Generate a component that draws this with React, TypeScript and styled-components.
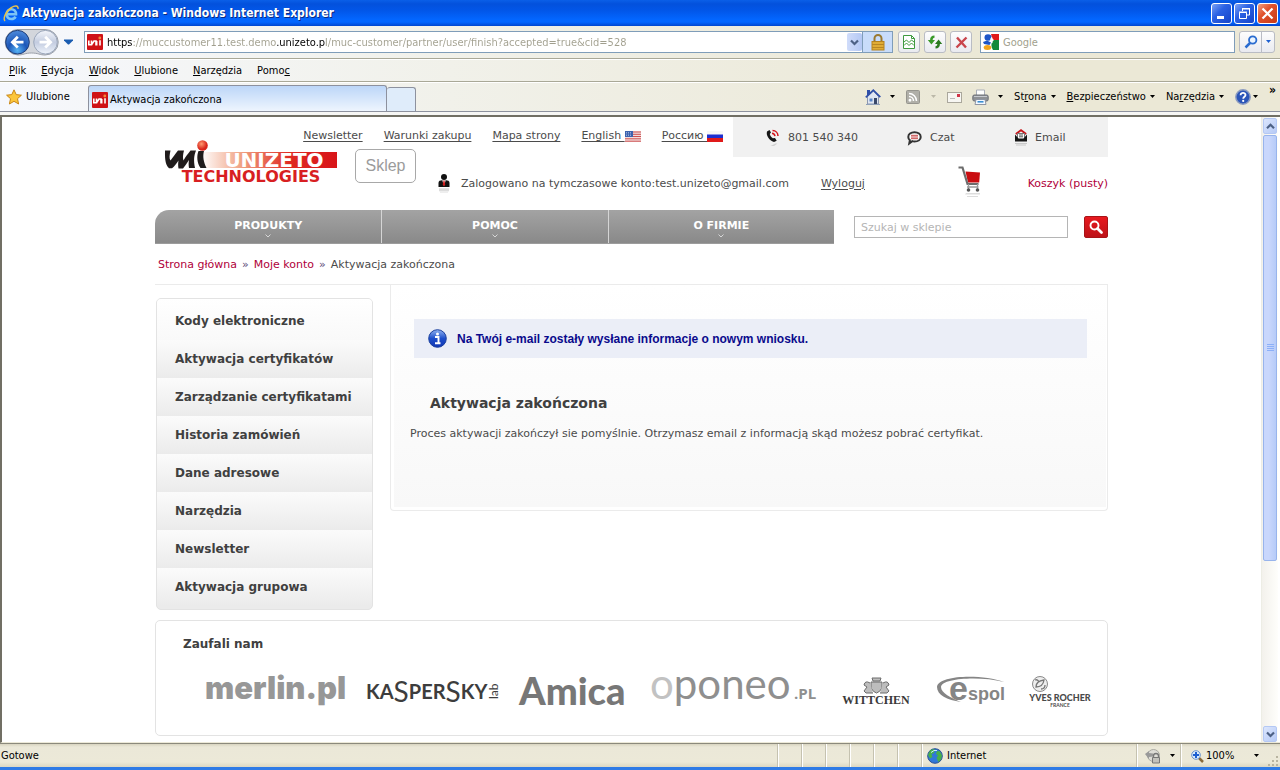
import React from "react";
import styled, { createGlobalStyle } from "styled-components";

const ui = `"DejaVu Sans Condensed", "DejaVu Sans", sans-serif`;
const web = `"DejaVu Sans", Verdana, sans-serif`;

const GlobalStyle = createGlobalStyle`
  * { box-sizing: border-box; }
  body { margin: 0; background: #ece9d8; }
  button, input { font: inherit; color: inherit; margin: 0; }
  button { padding: 0; border: 0; background: none; cursor: pointer; }
  svg { display: block; flex: none; overflow: visible; }
`;

const Window = styled.div`
  display: flex;
  flex-direction: column;
  min-height: 100vh;
  font: 11px/14px ${ui};
  color: #000;
`;

/* ---------- window chrome ---------- */

const TitleBar = styled.header`
  display: flex;
  align-items: center;
  gap: 3px;
  height: 26px;
  padding: 0 2px 0 3px;
  background: linear-gradient(#0a5fe8 0, #0351dc 15%, #0256e8 40%, #0366ff 75%, #0366ff 85%, #0146cf 100%);
  color: #fff;
`;

const WindowTitle = styled.h1`
  flex: 1;
  margin: 0;
  font: bold 12px/16px ${ui};
  text-shadow: 1px 1px 0 #0a2a80;
`;

const CaptionButtons = styled.div`
  display: flex;
  gap: 2px;
`;

const CaptionButton = styled.button<{ $close?: boolean }>`
  display: flex;
  align-items: center;
  justify-content: center;
  width: 21px;
  height: 21px;
  border: 1px solid #fff;
  border-radius: 3px;
  background: ${(p) =>
    p.$close
      ? "linear-gradient(135deg, #f0a080, #e0522c 40%, #c83a14)"
      : "linear-gradient(135deg, #7ba2f5, #2b62e4 40%, #1544c8)"};
`;

const barBackground = "linear-gradient(90deg, #f6f8fd 0, #f1f1ea 35%, #ebe8d6 75%)";

const AddressBar = styled.div`
  display: flex;
  align-items: center;
  height: 33px;
  padding: 0 5px;
  background: ${barBackground};
  border-bottom: 1px solid #a9a897;
`;

const NavButtons = styled.div`
  display: flex;
  align-items: center;
  gap: 4px;
  width: 79px;
`;

const UrlField = styled.div`
  display: flex;
  flex: 1;
  align-items: center;
  height: 22px;
  padding-left: 2px;
  border: 1px solid #7f9db9;
  background: #fff;
`;

const UrlInput = styled.input`
  flex: 1;
  min-width: 0;
  height: 20px;
  margin-left: 4px;
  padding: 1px 0 0;
  border: 0;
  outline: 0;
  color: #8c8a78;
  -webkit-text-fill-color: transparent;
  background: linear-gradient(90deg, #000 26px, #a19f8e 26px 169px, #000 169px 219px, #a19f8e 219px);
  -webkit-background-clip: text;
  background-clip: text;
`;

const DropButton = styled.button`
  display: flex;
  align-items: center;
  justify-content: center;
  width: 15px;
  height: 18px;
  border-radius: 2px;
  background: linear-gradient(90deg, #d0dcfa, #b4c8f4);
`;

const LockBox = styled.button`
  display: flex;
  align-items: center;
  justify-content: center;
  width: 30px;
  height: 22px;
  margin-right: 5px;
  border: 1px solid #7f9db9;
  border-left: 0;
  background: #c8dcfa;
`;

const ToolButton = styled.button`
  display: flex;
  align-items: center;
  justify-content: center;
  width: 22px;
  height: 22px;
  margin-right: 4px;
  border: 1px solid #b9bcc4;
  border-radius: 3px;
  background: linear-gradient(#fdfdfd, #e9eaf0);
`;

const SearchField = styled.label`
  display: flex;
  align-items: center;
  gap: 4px;
  width: 255px;
  height: 22px;
  margin-left: 4px;
  padding-left: 2px;
  border: 1px solid #7f9db9;
  background: #fff;
`;

const SearchInput = styled.input`
  flex: 1;
  min-width: 0;
  padding: 1px 0 0;
  border: 0;
  outline: 0;
  background: none;
  &::placeholder { color: #a19f8e; opacity: 1; }
`;

const SearchButtons = styled.div`
  display: flex;
  height: 22px;
  margin-left: 4px;
  border: 1px solid #b9bcc4;
  border-radius: 3px;
  background: linear-gradient(#fdfdfd, #e9eaf0);
`;

const SearchPart = styled.button<{ $width: number }>`
  display: flex;
  align-items: center;
  justify-content: center;
  width: ${(p) => p.$width}px;
  & + & { border-left: 1px solid #b9bcc4; }
`;

const MenuBar = styled.nav`
  display: flex;
  align-items: center;
  gap: 15px;
  height: 23px;
  padding: 1px 9px 0;
  background: ${barBackground};
  border-top: 1px solid #fff;
  border-bottom: 1px solid #a9a897;
`;

const TabRow = styled.div`
  display: flex;
  height: 30px;
  padding-left: 6px;
  background: ${barBackground};
  border-top: 1px solid #fff;
  border-bottom: 1px solid #8d919e;
`;

const Favorites = styled.button`
  display: flex;
  align-items: center;
  gap: 4px;
  width: 82px;
`;

const Tab = styled.button`
  display: flex;
  align-items: center;
  align-self: flex-end;
  gap: 2px;
  width: 299px;
  height: 26px;
  padding: 2px 3px 0;
  border: 1px solid #8d919e;
  border-bottom: 0;
  border-radius: 3px 3px 0 0;
  background: linear-gradient(#bcd6f8, #eef5fe);
`;

const NewTab = styled.button`
  align-self: flex-end;
  width: 29px;
  height: 24px;
  border: 1px solid #8d919e;
  border-bottom: 0;
  border-left: 0;
  border-radius: 3px 3px 0 0;
  background: #dfecfa;
`;

const CommandBar = styled.div`
  display: flex;
  flex: 1;
  align-items: center;
  justify-content: flex-end;
  gap: 10px;
  padding-right: 4px;
`;

const Command = styled.button<{ $gap?: number }>`
  display: flex;
  align-items: center;
  gap: ${(p) => p.$gap ?? 3}px;
`;

const Chevrons = styled.button`
  align-self: flex-start;
  font-weight: bold;
  font-size: 12px;
`;

const Frame = styled.div`
  display: flex;
  flex: 1;
  margin-top: 3px;
  padding-right: 2px;
  border-top: 2px solid #716f64;
  border-left: 2px solid #716f64;
  border-bottom: 1px solid #ece9d8;
  background: #fff;
`;

const Strip = styled.div`
  display: flex;
  flex: 1;
  flex-direction: column;
  background: #f6f6f4;
`;

const ScrollBar = styled.div`
  display: flex;
  flex-direction: column;
  width: 17px;
  padding: 1px 1px 0;
  border-left: 1px solid #edede5;
  background: linear-gradient(90deg, #f3f1ec, #fefefb);
`;

const ScrollButton = styled.button`
  display: flex;
  align-items: center;
  justify-content: center;
  height: 16px;
  border: 1px solid #b4c8f4;
  border-radius: 2px;
  background: linear-gradient(135deg, #dce6fd, #b6caf6);
`;

const ScrollTrack = styled.div`
  flex: 1;
  padding-top: 1px;
`;

const ScrollThumb = styled.div`
  display: flex;
  align-items: center;
  justify-content: center;
  height: 72%;
  border: 1px solid #98b4ec;
  border-radius: 2px;
  background: linear-gradient(90deg, #c9d7fc 40%, #b6cbf8);
`;

const StatusBar = styled.footer`
  display: flex;
  align-items: stretch;
  height: 27px;
  padding: 0 1px;
  border-top: 1px solid #8b897c;
  border-bottom: 3px solid #2f7be6;
  background: linear-gradient(#d8d4c0, #ebe8d8 3px, #ece9d8 18px, #dcd8c2);
`;

const StatusCell = styled.div<{ $width?: number; $pad?: number; $gap?: number }>`
  display: flex;
  align-items: center;
  gap: ${(p) => p.$gap ?? 4}px;
  width: ${(p) => (p.$width ? `${p.$width}px` : "auto")};
  flex: ${(p) => (p.$width ? "none" : 1)};
  padding-top: 1px;
  padding-left: ${(p) => p.$pad ?? 0}px;
  & + & {
    border-left: 1px solid #c5c2b0;
    box-shadow: inset 1px 0 0 #fff;
  }
`;

const ZoomValue = styled.span`
  width: 45px;
`;

const GripBox = styled.span`
  align-self: flex-end;
  margin-left: auto;
`;

/* ---------- web page ---------- */

const Viewport = styled.main`
  flex: 1;
  min-width: 0;
  padding-bottom: 6px;
  font: 11px/14px ${web};
  color: #4b4b4b;
`;

const Site = styled.div`
  max-width: 953px;
  margin: 0 auto;
`;

const TopRow = styled.div`
  display: flex;
  justify-content: flex-end;
  height: 40px;
`;

const TopLinks = styled.nav`
  display: flex;
  align-items: center;
  gap: 21px;
  margin-right: 10px;
  padding-bottom: 2px;
`;

const TextLink = styled.a<{ $tone?: "red" }>`
  display: flex;
  align-items: center;
  white-space: pre;
  color: ${(p) => (p.$tone ? "#b0003a" : "#4b4b4b")};
  text-decoration: ${(p) => (p.$tone ? "none" : "underline")};
  text-underline-offset: 2px;
`;

const Contacts = styled.div`
  display: grid;
  grid-template-columns: 141px 108px 1fr;
  align-items: center;
  width: 375px;
  padding-top: 1px;
  padding-left: 33px;
  background: #f1f1f1;
`;

const Contact = styled.a`
  display: flex;
  align-items: center;
  gap: 8px;
  color: #4b4b4b;
  text-decoration: none;
`;

const BrandRow = styled.div`
  display: flex;
  align-items: center;
  height: 53px;
  padding-left: 10px;
`;

const Brand = styled.div`
  display: flex;
  align-items: flex-end;
  align-self: flex-start;
  gap: 17px;
  margin-top: -17px;
  margin-right: 22px;
`;

const ShopButton = styled.button`
  width: 61px;
  height: 34px;
  border: 1px solid #a8a8a8;
  border-radius: 5px;
  font: 16px/20px "Liberation Sans", sans-serif;
  color: #9b9b9b;
`;

const Account = styled.div`
  display: flex;
  align-items: center;
  gap: 11px;
  margin-right: 32px;
  white-space: nowrap;
`;

const Basket = styled.div`
  display: flex;
  align-items: center;
  gap: 46px;
  margin-left: auto;
`;

const NavRow = styled.div`
  display: flex;
  align-items: center;
`;

const MainNav = styled.nav`
  display: grid;
  grid-template-columns: repeat(3, 1fr);
  flex: 1;
  height: 34px;
  border-radius: 14px 0 0 0;
  border-bottom: 1px solid #9c9c9c;
  background: linear-gradient(#a3a3a3, #898989);
`;

const NavItem = styled.a`
  display: flex;
  flex-direction: column;
  align-items: center;
  gap: 1px;
  padding-top: 9px;
  font-weight: bold;
  color: #fff;
  text-decoration: none;
  & + & { border-left: 1px solid #d5d5d5; }
`;

const ShopSearch = styled.form`
  display: flex;
  justify-content: space-between;
  width: 274px;
  padding-left: 20px;
`;

const ShopSearchInput = styled.input`
  width: 214px;
  height: 22px;
  padding: 0 6px;
  border: 1px solid #b5b5b5;
  outline: 0;
  &::placeholder { color: #b5b5b5; opacity: 1; }
`;

const ShopSearchButton = styled.button`
  display: flex;
  align-items: center;
  justify-content: center;
  width: 24px;
  height: 22px;
  border: 1px solid #a81418;
  border-radius: 2px;
  background: linear-gradient(#e8191f, #bd1218);
`;

const Breadcrumb = styled.nav`
  display: flex;
  align-items: center;
  gap: 5px;
  height: 41px;
  padding-top: 2px;
  padding-left: 3px;
  border-bottom: 1px solid #ebebeb;
  color: #5c4a78;
`;

const Current = styled.span`
  color: #4b4b4b;
`;

const Columns = styled.div`
  display: flex;
  align-items: flex-start;
  gap: 17px;
  padding-left: 1px;
`;

const SideMenu = styled.nav`
  width: 217px;
  margin-top: 13px;
  overflow: hidden;
  border: 1px solid #e3e3e3;
  border-radius: 5px;
  background: #ebebeb;
  padding-bottom: 3px;
`;

const SideLink = styled.a`
  display: flex;
  align-items: center;
  height: 38px;
  padding: 0 18px;
  background: linear-gradient(#fbfbfb, #ebebeb);
  font: bold 12px/16px ${web};
  color: #404040;
  text-decoration: none;
  &:first-child {
    height: 41px;
    padding-top: 2px;
    background: linear-gradient(#fff, #f9f9f9);
  }
`;

const Panel = styled.section`
  flex: 1;
  min-width: 0;
  padding: 0 1px 3px 3px;
  border: 1px solid #ebebeb;
  border-top: 0;
  border-radius: 0 0 4px 4px;
`;

const PanelBody = styled.div`
  min-height: 222px;
  padding: 34px 19px 0 16px;
  background: linear-gradient(#fff, #f8f8f8);
`;

const Notice = styled.p`
  display: flex;
  align-items: center;
  gap: 10px;
  height: 39px;
  margin: 0 0 0 4px;
  padding-left: 14px;
  background: #ebeef7;
  font: bold 12px/16px "Liberation Sans", sans-serif;
  color: #0a0a8c;
`;

const Heading = styled.h2`
  margin: 35px 0 0 20px;
  font: bold 14px/20px ${web};
  color: #404040;
`;

const Message = styled.p`
  margin: 14px 0 0;
`;

const Trusted = styled.section`
  height: 116px;
  margin-top: 10px;
  padding: 15px 15px 0 27px;
  border: 1px solid #e3e3e3;
  border-radius: 5px;
`;

const TrustedTitle = styled.h3`
  margin: 0 0 18px;
  font: bold 12px/16px ${web};
  color: #404040;
`;

const Partners = styled.div`
  display: flex;
  gap: 22px;
  padding-left: 23px;
`;

/* ---------- icons ---------- */

const Down = ({ color = "#000" }: { color?: string }) => (
  <svg width="7" height="4" viewBox="0 0 7 4"><path d="M1 0h5L3.5 3z" fill={color} /></svg>
);

const Chevron = ({ up = false, color = "#4d6185" }: { up?: boolean; color?: string }) => (
  <svg width="9" height="7" viewBox="0 0 9 7" fill="none" stroke={color} strokeWidth="2.2">
    <path d={up ? "M1 5.2L4.5 1.8 8 5.2" : "M1 1.5L4.5 5 8 1.5"} />
  </svg>
);

const IeIcon = () => (
  <svg width="16" height="17" viewBox="0 0 16 17" fill="none">
    <path d="M3.5 9.3H13C13 5.8 10.800 4.300 8.400 4.300 5.600 4.300 3.700 6.400 3.700 9.300c0 2.900 2 4.700 4.700 4.700 2 0 3.400-.9 4.100-2.400" stroke="#7cc4f5" strokeWidth="2.600" />
    <path d="M2 16C-.5 13.500 3.500 5.500 8.500 2.500 11.500.5 15.500.2 15 3.800" stroke="#e8c34a" strokeWidth="1.500" />
  </svg>
);

const BackForward = () => (
  <svg width="55" height="29" viewBox="0 0 55 29">
    <defs>
      <radialGradient id="backFill" cx=".5" cy=".85" r=".8">
        <stop offset="0" stopColor="#58b4f4" /><stop offset=".5" stopColor="#1c56b8" /><stop offset="1" stopColor="#4a86d8" />
      </radialGradient>
      <linearGradient id="fwdFill" x2="0" y2="1">
        <stop offset="0" stopColor="#f4f6fb" /><stop offset=".5" stopColor="#c3cce0" /><stop offset="1" stopColor="#eef3fb" />
      </linearGradient>
    </defs>
    <path d="M13 1.500h27a13 12.500 0 0 1 0 25.500c-5 0-7-2-13.500-2S18 27 13 27A12.700 12.700 0 0 1 13 1.500z" fill="#d3d6dc" stroke="#9a9fa8" />
    <circle cx="12.500" cy="14.200" r="11.800" fill="url(#backFill)" stroke="#1d3c78" />
    <path d="M18.500 14.200H8M12.800 8.800L7.400 14.200l5.400 5.400" fill="none" stroke="#fff" strokeWidth="2.800" />
    <circle cx="40.500" cy="14.200" r="11.800" fill="url(#fwdFill)" stroke="#9aa6ba" />
    <path d="M34.500 14.200H45M40.200 8.800l5.400 5.400-5.400 5.400" fill="none" stroke="#fff" strokeWidth="2.800" />
  </svg>
);

const SiteIcon = () => (
  <svg width="16" height="16" viewBox="0 0 16 16">
    <rect width="16" height="16" rx="1" fill="#cf1217" />
    <path d="M1.800 6.500v4.300h2.700V6.500M4.500 10.800l2.500-3.800h2V11.500M9.700 7v4.500M13 6.300v5.200" stroke="#fff" strokeWidth="1.600" fill="none" />
    <circle cx="12.800" cy="4" r="1.400" fill="#f2873c" />
  </svg>
);

const LockIcon = () => (
  <svg width="14" height="17" viewBox="0 0 14 17">
    <path d="M3.500 8V4.500a3.500 3.500 0 0 1 7 0V8" fill="none" stroke="#9a7a30" strokeWidth="2" />
    <rect x="1" y="7.500" width="12" height="8.500" fill="#e0ac35" stroke="#b58220" />
    <path d="M1 10.500h12M1 13.500h12" stroke="#b98622" />
  </svg>
);

const BrokenPageIcon = () => (
  <svg width="14" height="16" viewBox="0 0 14 16" fill="none" stroke="#3f9a3f">
    <path d="M1.500 1.500h8l3 3v10h-11z" fill="#fff" /><path d="M9.500 1.500v3h3" />
    <path d="M2 8l2.500-2L7 8.500 9.500 6 12 8M2 11.500L4.500 9 7 11.500 9.500 9l2.500 2.500" />
  </svg>
);

const RefreshIcon = () => (
  <svg width="16" height="14" viewBox="0 0 16 14">
    <path d="M7.500.5v2.200C6 3 5.700 3.600 5.700 5H8L4.400 9.500.8 5h2.300C3.100 2 4.500.7 7.500.5z" fill="#3a9a2a" />
    <path d="M8.500 13.500v-2.200c1.500-.3 1.800-.9 1.800-2.300H8l3.600-4.500L15.200 9h-2.300c0 3-1.400 4.300-4.400 4.500z" fill="#2a7a1e" />
  </svg>
);

const StopIcon = () => (
  <svg width="13" height="13" viewBox="0 0 13 13"><path d="M2 1.500l9 10M11.500 1.500l-10 10" stroke="#c9454c" strokeWidth="2.400" /></svg>
);

const GoogleIcon = () => (
  <svg width="16" height="16" viewBox="0 0 16 16">
    <rect width="16" height="16" fill="#fff" />
    <path d="M8 0h8v6h-5C9 5 8.500 2.500 8 0z" fill="#e01b1b" />
    <path d="M11 6h5v10h-6C7.500 12 8 8.500 11 6z" fill="#128a3a" />
    <ellipse cx="5" cy="3.500" rx="3.500" ry="3.300" fill="#1d56c8" />
    <path d="M0 8l4-1.500 4 2L6.500 11 1 10z" fill="#1d56c8" />
    <ellipse cx="4.500" cy="13.500" rx="3.800" ry="2.500" fill="#f2a51c" />
    <path d="M9 3.500Q6.500 7 9.500 8.500" stroke="#fff" strokeWidth="1.500" fill="none" />
  </svg>
);

const MagnifierIcon = () => (
  <svg width="14" height="14" viewBox="0 0 14 14" fill="none" stroke="#2a6cd0">
    <circle cx="8.700" cy="5" r="3.700" strokeWidth="1.800" fill="#eaf4ff" /><path d="M6 8l-4.500 4.500" strokeWidth="2.500" />
  </svg>
);

const StarIcon = () => (
  <svg width="16" height="16" viewBox="0 0 16 16">
    <path d="M8 .8l2.200 4.800 5.200.6-3.900 3.500 1.100 5.300L8 12.300 3.400 15l1.100-5.300L.6 6.200l5.200-.6z" fill="#fcc63c" stroke="#c98718" />
  </svg>
);

const HomeIcon = () => (
  <svg width="16" height="16" viewBox="0 0 16 16">
    <path d="M2 1h3v5H2z" fill="#2f4fa8" /><path d="M2.500 7.500L8.500 2l5 5.500V15h-11z" fill="#dfe6f2" stroke="#8b97b0" />
    <path d="M.8 8.300L8.300 1.200l7 7" fill="none" stroke="#2f4fa8" strokeWidth="1.800" />
    <path d="M4.500 9.500h3v3h-3z" fill="#5a86c8" /><path d="M9 9h3v6H9z" fill="#38486a" />
    <path d="M1 15.500h14" stroke="#8fa0b8" />
  </svg>
);

const RssIcon = () => (
  <svg width="14" height="14" viewBox="0 0 14 14" fill="none" stroke="#fff" strokeWidth="1.500">
    <rect x=".5" y=".5" width="13" height="13" rx="1" fill="#b0afa8" stroke="#96958e" strokeWidth="1" />
    <circle cx="4" cy="10.200" r=".7" fill="#fff" /><path d="M3 6.500a4.500 4.500 0 0 1 4.500 4.500M3 3.500A7.500 7.500 0 0 1 10.500 11" />
  </svg>
);

const MailIcon = () => (
  <svg width="15" height="11" viewBox="0 0 15 11">
    <rect x=".5" y=".5" width="14" height="10" fill="#f7f6f2" stroke="#aaa79c" /><path d="M10 2h3v3h-3z" fill="#d0364a" /><path d="M3 6.500h5" stroke="#bbb" />
  </svg>
);

const PrinterIcon = () => (
  <svg width="17" height="16" viewBox="0 0 17 16">
    <path d="M4.500 1h8v6h-8z" fill="#fff" stroke="#a9aeb8" /><rect x=".8" y="6" width="15.400" height="6" rx="1.500" fill="#8e9196" stroke="#6d7077" />
    <path d="M2 7.500h13" stroke="#c6c9cf" /><path d="M4 10.500h9l1 5H3z" fill="#f4f8ff" stroke="#8e95a3" /><path d="M5.500 12.800h6" stroke="#3a8ed0" strokeWidth="1.600" />
  </svg>
);

const HelpIcon = () => (
  <svg width="16" height="16" viewBox="0 0 16 16">
    <circle cx="8" cy="8" r="7.200" fill="#2b55b8" stroke="#8c9cc0" strokeWidth="1.500" />
    <path d="M5.600 6.200C5.600 3 10.500 3.200 10.500 6c0 1.800-2.300 1.800-2.300 3.800" fill="none" stroke="#fff" strokeWidth="1.800" /><circle cx="8.200" cy="11.900" r="1.100" fill="#fff" />
  </svg>
);

const UsFlag = () => (
  <svg width="16" height="11" viewBox="0 0 16 11">
    <rect width="16" height="11" fill="#f3dcdc" />
    <path d="M0 1h16M0 3.300h16M0 5.500h16M0 7.800h16M0 10.200h16" stroke="#cc5050" />
    <rect width="8" height="6" fill="#3c62ae" /><path d="M1 1.500h6M1 3h6M1 4.500h6" stroke="#b7c8ea" strokeWidth=".7" strokeDasharray="1 1" />
  </svg>
);

const RuFlag = () => (
  <svg width="16" height="11" viewBox="0 0 16 11">
    <rect width="16" height="4" fill="#f7f7f7" /><rect y="3.500" width="16" height="4" fill="#1c2fd0" /><rect y="7" width="16" height="4" fill="#e01a1a" />
  </svg>
);

const PhoneIcon = () => (
  <svg width="14" height="18" viewBox="0 0 14 18">
    <path d="M1 2.500C-.2 6 3 11.800 8 13l2.700-1.300L9 9 6.800 9.300C5 8 4 6.500 3.800 5L5 3.500 3.500 1z" fill="#161616" />
    <path d="M6 4.300c1.700.2 2.700 1.200 3 2.900M6.500 1.500C9.800 1.600 12 4 12 7" fill="none" stroke="#d4151a" strokeWidth="1.500" />
    <path d="M4.500 17l5-2.500h2L8 17z" fill="#d0d0d0" />
  </svg>
);

const ChatIcon = () => (
  <svg width="15" height="14" viewBox="0 0 15 14">
    <path d="M7.500 1.200c3.700 0 6.200 2 6.200 4.700s-2.500 4.600-6.200 4.600c-.8 0-1.500 0-2.200-.3L2.300 12.400l.6-3.200C1.900 8.400 1.300 7.300 1.300 5.900c0-2.700 2.500-4.700 6.200-4.700z" fill="#fff" stroke="#333" strokeWidth="2" />
    <path d="M4 4.300h7M4 6h7M4 7.700h7" stroke="#c03030" strokeWidth=".9" />
  </svg>
);

const EmailIcon = () => (
  <svg width="12" height="18" viewBox="0 0 12 18">
    <path d="M.8 5L6 1.200 11.200 5" fill="none" stroke="#c7161b" strokeWidth="1.800" />
    <path d="M2.500 4.500h7v6h-7z" fill="#fff" stroke="#777" /><path d="M4 6h4M4 7.800h4" stroke="#555" />
    <path d="M0 5.500l3.500 4h5l3.500-4v7H0z" fill="#161616" /><path d="M0 14h12v1H0zM1 15.500h10v1H1z" fill="#c9c9c9" />
  </svg>
);

const UserIcon = () => (
  <svg width="12" height="20" viewBox="0 0 12 20">
    <circle cx="6" cy="3" r="3" fill="#111" /><path d="M.5 13V9C.5 7 2 6.300 4 6.300h4c2 0 3.500.7 3.500 2.700v4z" fill="#111" />
    <path d="M4.300 6.300h3.400L6 12z" fill="#fff" /><path d="M5.500 6.500h1l.7 4L6 12.500l-1.200-2z" fill="#d01a1a" />
    <path d="M1 14.300h10v3H1z" fill="#dcdcdc" /><path d="M2 17h8v2H2z" fill="#eee" />
  </svg>
);

const CartIcon = () => (
  <svg width="24" height="36" viewBox="0 0 24 36">
    <path d="M7.500 5.500l14.500 1-.8 10H10z" fill="#c90c10" />
    <path d="M.5 1.500h4L9.500 18h11" fill="none" stroke="#6c6c6c" strokeWidth="2.200" />
    <path d="M10.500 18v5M19.500 18v5M9 21h11.500" fill="none" stroke="#9a9a9a" strokeWidth="1.300" />
    <circle cx="10.500" cy="24" r="1.800" fill="#555" /><circle cx="19.500" cy="24" r="1.800" fill="#555" />
    <path d="M8 27h14v1.500H7zM9 30h11v1H9z" fill="#ddd" />
  </svg>
);

const LensIcon = () => (
  <svg width="14" height="14" viewBox="0 0 14 14" fill="none" stroke="#fff">
    <circle cx="5.500" cy="5.500" r="4" strokeWidth="1.900" /><path d="M8.500 8.500l4 4" strokeWidth="2.800" strokeLinecap="round" />
  </svg>
);

const InfoIcon = () => (
  <svg width="19" height="19" viewBox="0 0 19 19">
    <defs>
      <linearGradient id="infoFill" x2="0" y2="1"><stop offset="0" stopColor="#8fb2f0" /><stop offset=".5" stopColor="#1d4fcb" /><stop offset="1" stopColor="#1236b4" /></linearGradient>
    </defs>
    <circle cx="9.500" cy="9.500" r="8.800" fill="url(#infoFill)" stroke="#1a3f9e" />
    <circle cx="9.500" cy="4.900" r="1.500" fill="#fff" /><path d="M7 8h3.500v6M7 14.200h5.500" fill="none" stroke="#fff" strokeWidth="1.900" />
  </svg>
);

const GlobeIcon = () => (
  <svg width="16" height="16" viewBox="0 0 16 16">
    <circle cx="8" cy="8" r="7.300" fill="#2f78d8" stroke="#2a4f94" />
    <path d="M3 2.500Q6 .5 8 1.500L7 5 4.500 6 5.500 9 3 10.500 1 7zM10 3l3 .5 2 4-1 4-2.500 2.500L9.500 10 11 7.500 9 6z" fill="#48b04a" />
    <path d="M4 4.500q3-3 6-2" stroke="#c9ecff" fill="none" />
  </svg>
);

const PrivacyIcon = () => (
  <svg width="16" height="15" viewBox="0 0 16 15">
    <circle cx="8.500" cy="6.500" r="6" fill="#dddcd6" stroke="#aaa9a2" /><path d="M0 5l4-3v2l4 .5v3L4 8v2z" fill="#999" />
    <path d="M8.500 8.500V7a2.500 2.500 0 0 1 5 0v1.500" stroke="#777" fill="none" strokeWidth="1.300" /><path d="M7.500 8.500h7V14h-7z" fill="#c2c1bb" stroke="#777" />
  </svg>
);

const ZoomIcon = () => (
  <svg width="13" height="13" viewBox="0 0 13 13">
    <path d="M8 8l4 4" stroke="#8a6a3a" strokeWidth="2.500" /><circle cx="5" cy="5" r="4.300" fill="#d9ecfc" stroke="#6b93cc" />
    <path d="M5 2v6M2 5h6" stroke="#1d5fd0" strokeWidth="2" />
  </svg>
);

const Grip = () => (
  <svg width="12" height="12" viewBox="0 0 12 12" fill="#b8b4a0">
    <path d="M9 1h2v2H9zM5 5h2v2H5zM9 5h2v2H9zM1 9h2v2H1zM5 9h2v2H5zM9 9h2v2H9z" />
  </svg>
);

/* ---------- logos ---------- */

const UnizetoLogo = () => (
  <svg width="173" height="43" viewBox="0 0 173 43" role="img" aria-label="Unizeto Technologies">
    <defs>
      <linearGradient id="band"><stop offset="0" stopColor="#fff" /><stop offset=".3" stopColor="#f0a080" /><stop offset=".65" stopColor="#df2a22" /><stop offset="1" stopColor="#d81519" /></linearGradient>
      <radialGradient id="ball" cx=".4" cy=".35"><stop offset="0" stopColor="#ff9a70" /><stop offset="1" stopColor="#d8261c" /></radialGradient>
    </defs>
    <rect x="36" y="12" width="136" height="16" fill="url(#band)" />
    <path d="M0 10.500h5.500C4.500 15 4 18.500 5.500 20.500c2-3 5-6.500 7.500-10h6c-1 4-1.500 7-.5 10 2-4 4.500-6.500 7-10h5.500c-2 5-2.500 10-1 17.500h-6c-.5-3-.5-5 0-8-2 3-4 6-6 8.500h-4.500c-.5-3-.5-5 0-8-2 3-4 6-6.500 7.800H4C-.5 24 0 16 0 10.500z" fill="#1f1b1b" />
    <path d="M33.500 11h5.500c-1.500 5-.5 11 2.500 17h-6c-3.500-5-4-12-2-17z" fill="#1f1b1b" />
    <circle cx="37.500" cy="5.500" r="5.300" fill="url(#ball)" />
    <text x="109" y="27" textAnchor="middle" fontFamily="DejaVu Sans" fontWeight="bold" fontSize="20" fill="#fff">UNIZETO</text>
    <text x="86" y="42" textAnchor="middle" fontFamily="DejaVu Sans" fontWeight="bold" fontSize="16" fill="#d81f22">TECHNOLOGIES</text>
  </svg>
);

const MerlinLogo = () => (
  <svg width="139" height="40" viewBox="0 0 139 40"><text x="-1" y="29" fontFamily="Inter" fontWeight="900" fontSize="31" fill="#979797">merlin.pl</text></svg>
);

const KasperskyLogo = () => (
  <svg width="131" height="40" viewBox="0 0 131 40" fill="#3d3d3d">
    <text x="-1" y="29" fontFamily="Lato" fontWeight="bold" fontSize="20">
      KA<tspan fontSize="28" fontWeight="normal" dy="3">S</tspan><tspan dy="-3">PER</tspan><tspan fontSize="28" fontWeight="normal" dy="3">S</tspan><tspan dy="-3">KY</tspan>
    </text>
    <text transform="translate(131 29) rotate(-90)" fontFamily="Lato" fontSize="12">lab</text>
  </svg>
);

const AmicaLogo = () => (
  <svg width="110" height="40" viewBox="0 0 110 40"><text x="-1" y="35" fontFamily="Lato" fontWeight="900" fontSize="38" fill="#777">Amica</text></svg>
);

const OponeoLogo = () => (
  <svg width="166" height="40" viewBox="0 0 166 40" fill="#8f8f8f" fontFamily="Lato">
    <text x="-2" y="29" fontSize="42"><tspan fill="#c2c2c2">o</tspan>poneo</text>
    <text x="142" y="29" fontFamily="Open Sans" fontWeight="bold" fontSize="15">.PL</text>
  </svg>
);

const WittchenLogo = () => (
  <svg width="72" height="40" viewBox="0 0 72 40">
    <g fill="#bdbdbd" stroke="#6d6d6d">
      <path d="M32 8h9l-1 3h-7zM31 12h11v6q-2 4-5.500 5Q33 22 31 18z" /><path d="M30 13q-5-3-6 2l3 2-3 4 2 2h7M43 13q5-3 6 2l-3 2 3 4-2 2h-7" />
    </g>
    <text x="36" y="34" textAnchor="middle" fontFamily="Liberation Serif" fontWeight="bold" fontSize="12" fill="#3a3a3a">WITTCHEN</text>
  </svg>
);

const EspolLogo = () => (
  <svg width="72" height="40" viewBox="0 0 72 40" fill="#858585">
    <path d="M70 12C48 4 4 5 3 17c0 8 10 13 24 15C17 28 7 23 7 17 8 8 46 6 70 12z" />
    <text x="15" y="30" fontFamily="Liberation Sans" fontWeight="bold" fontSize="34">e</text>
    <text x="34" y="30" fontFamily="Liberation Sans" fontWeight="bold" fontSize="18">spol</text>
  </svg>
);

const YvesLogo = () => (
  <svg width="64" height="40" viewBox="0 0 64 40" fill="#4a4a4a">
    <circle cx="12" cy="14" r="7.500" fill="#eee" stroke="#8a8a8a" />
    <path d="M8 17q0-6 8-7-1 7-8 7zM7 10q3-1 4 2M13 19q4 0 4-4" fill="none" stroke="#777" strokeWidth="1.300" />
    <text x="32" y="31" textAnchor="middle" fontFamily="Lato" fontWeight="900" fontSize="9">YVES ROCHER</text>
    <text x="32" y="37" textAnchor="middle" fontFamily="Lato" fontWeight="bold" fontSize="5">FRANCE</text>
  </svg>
);

/* ---------- data ---------- */

const menus: [string, string, string][] = [
  ["", "P", "lik"], ["", "E", "dycja"], ["", "W", "idok"], ["", "U", "lubione"], ["", "N", "arzędzia"], ["Pomo", "c", ""],
];
const navItems = ["PRODUKTY", "POMOC", "O FIRMIE"];
const sideItems = [
  "Kody elektroniczne", "Aktywacja certyfikatów", "Zarządzanie certyfikatami", "Historia zamówień",
  "Dane adresowe", "Narzędzia", "Newsletter", "Aktywacja grupowa",
];

const Label = ({ parts: [before, key, after] }: { parts: [string, string, string] }) => (
  <span>{before}<u>{key}</u>{after}</span>
);

const BrowserChrome = () => (
  <>
    <TitleBar>
      <IeIcon />
      <WindowTitle>Aktywacja zakończona - Windows Internet Explorer</WindowTitle>
      <CaptionButtons>
        <CaptionButton aria-label="Minimalizuj">
          <svg width="13" height="13"><path d="M2 9h7v3H2z" fill="#fff" /></svg>
        </CaptionButton>
        <CaptionButton aria-label="Przywróć">
          <svg width="13" height="13" fill="none" stroke="#fff"><path d="M4.500 4V2h7v6H9M4 1.500h8M1.500 5.500h7v6h-7zM1 5h8" /></svg>
        </CaptionButton>
        <CaptionButton $close aria-label="Zamknij">
          <svg width="13" height="13"><path d="M1.500 1.500l10 10M11.500 1.500l-10 10" stroke="#fff" strokeWidth="2.200" /></svg>
        </CaptionButton>
      </CaptionButtons>
    </TitleBar>
    <AddressBar>
      <NavButtons>
        <button aria-label="Wstecz i dalej"><BackForward /></button>
        <button aria-label="Ostatnie strony">
          <svg width="9" height="6"><path d="M0 .5h9v1L5 5.500H4L0 1.500z" fill="#1a5cb0" /></svg>
        </button>
      </NavButtons>
      <UrlField>
        <SiteIcon />
        <UrlInput aria-label="Adres" defaultValue="https://muccustomer11.test.demo.unizeto.pl/muc-customer/partner/user/finish?accepted=true&cid=528" />
        <DropButton aria-label="Lista adresów"><Chevron /></DropButton>
      </UrlField>
      <LockBox aria-label="Zabezpieczenia"><LockIcon /></LockBox>
      <ToolButton aria-label="Widok zgodności"><BrokenPageIcon /></ToolButton>
      <ToolButton aria-label="Odśwież"><RefreshIcon /></ToolButton>
      <ToolButton aria-label="Zatrzymaj"><StopIcon /></ToolButton>
      <SearchField>
        <GoogleIcon />
        <SearchInput aria-label="Google" placeholder="Google" />
      </SearchField>
      <SearchButtons>
        <SearchPart $width={21} aria-label="Szukaj"><MagnifierIcon /></SearchPart>
        <SearchPart $width={13} aria-label="Opcje wyszukiwania"><Down color="#1d5fd0" /></SearchPart>
      </SearchButtons>
    </AddressBar>
    <MenuBar>
      {menus.map((m) => <button key={m.join("")}><Label parts={m} /></button>)}
    </MenuBar>
    <TabRow>
      <Favorites><StarIcon />Ulubione</Favorites>
      <Tab><SiteIcon />Aktywacja zakończona</Tab>
      <NewTab aria-label="Nowa karta" />
      <CommandBar>
        <Command $gap={8} aria-label="Strona główna"><HomeIcon /><Down /></Command>
        <Command $gap={10} aria-label="Kanały"><RssIcon /><Down color="#bbb8a8" /></Command>
        <Command aria-label="Poczta"><MailIcon /></Command>
        <Command $gap={8} aria-label="Drukuj"><PrinterIcon /><Down /></Command>
        <Command><Label parts={["St", "r", "ona"]} /><Down /></Command>
        <Command><Label parts={["", "B", "ezpieczeństwo"]} /><Down /></Command>
        <Command><Label parts={["Na", "r", "zędzia"]} /><Down /></Command>
        <Command $gap={1} aria-label="Pomoc"><HelpIcon /><Down /></Command>
        <Chevrons aria-label="Więcej">»</Chevrons>
      </CommandBar>
    </TabRow>
  </>
);

const ShopPage = () => (
  <Viewport>
    <Site>
      <TopRow>
        <TopLinks>
          <TextLink href="#">Newsletter</TextLink>
          <TextLink href="#">Warunki zakupu</TextLink>
          <TextLink href="#">Mapa strony</TextLink>
          <TextLink href="#">{"English\u00a0"}<UsFlag /></TextLink>
          <TextLink href="#">{"Россию\u00a0"}<RuFlag /></TextLink>
        </TopLinks>
        <Contacts>
          <Contact href="#"><PhoneIcon />801 540 340</Contact>
          <Contact href="#"><ChatIcon />Czat</Contact>
          <Contact href="#"><EmailIcon />Email</Contact>
        </Contacts>
      </TopRow>
      <BrandRow>
        <Brand><UnizetoLogo /><ShopButton>Sklep</ShopButton></Brand>
        <Account><UserIcon /><span>Zalogowano na tymczasowe konto:test.unizeto@gmail.com</span></Account>
        <TextLink href="#">Wyloguj</TextLink>
        <Basket><CartIcon /><TextLink href="#" $tone="red">Koszyk (pusty)</TextLink></Basket>
      </BrandRow>
      <NavRow>
        <MainNav>
          {navItems.map((n) => (
            <NavItem key={n} href="#">
              {n}
              <svg width="6" height="4" fill="none" stroke="#d8d8d8"><path d="M.5.500L3 3 5.500.500" /></svg>
            </NavItem>
          ))}
        </MainNav>
        <ShopSearch>
          <ShopSearchInput aria-label="Szukaj w sklepie" placeholder="Szukaj w sklepie" />
          <ShopSearchButton type="button" aria-label="Szukaj"><LensIcon /></ShopSearchButton>
        </ShopSearch>
      </NavRow>
      <Breadcrumb>
        <TextLink href="#" $tone="red">Strona główna</TextLink>»
        <TextLink href="#" $tone="red">Moje konto</TextLink>»
        <Current>Aktywacja zakończona</Current>
      </Breadcrumb>
      <Columns>
        <SideMenu>
          {sideItems.map((s) => <SideLink key={s} href="#">{s}</SideLink>)}
        </SideMenu>
        <Panel>
          <PanelBody>
            <Notice><InfoIcon />Na Twój e-mail zostały wysłane informacje o nowym wniosku.</Notice>
            <Heading>Aktywacja zakończona</Heading>
            <Message>Proces aktywacji zakończył sie pomyślnie. Otrzymasz email z informacją skąd możesz pobrać certyfikat.</Message>
          </PanelBody>
        </Panel>
      </Columns>
      <Trusted>
        <TrustedTitle>Zaufali nam</TrustedTitle>
        <Partners>
          <MerlinLogo /><KasperskyLogo /><AmicaLogo /><OponeoLogo /><WittchenLogo /><EspolLogo /><YvesLogo />
        </Partners>
      </Trusted>
    </Site>
  </Viewport>
);

const App = () => (
  <Window>
    <GlobalStyle />
    <BrowserChrome />
    <Strip>
      <Frame>
        <ShopPage />
        <ScrollBar>
          <ScrollButton aria-label="W górę"><Chevron up /></ScrollButton>
          <ScrollTrack>
            <ScrollThumb>
              <svg width="7" height="8"><path d="M0 .5h7M0 2.500h7M0 4.500h7M0 6.500h7" stroke="#8cb0f8" /></svg>
            </ScrollThumb>
          </ScrollTrack>
          <ScrollButton aria-label="W dół"><Chevron /></ScrollButton>
        </ScrollBar>
      </Frame>
    </Strip>
    <StatusBar>
      <StatusCell>Gotowe</StatusCell>
      {[0, 1, 2, 3, 4, 5].map((i) => <StatusCell key={i} $width={24} />)}
      <StatusCell $width={215} $pad={5}><GlobeIcon />Internet</StatusCell>
      <StatusCell $width={44} $pad={8} $gap={8}><PrivacyIcon /><Down /></StatusCell>
      <StatusCell $width={99} $pad={10} $gap={2}>
        <ZoomIcon /><ZoomValue>100%</ZoomValue><Down /><GripBox><Grip /></GripBox>
      </StatusCell>
    </StatusBar>
  </Window>
);

export default App;
